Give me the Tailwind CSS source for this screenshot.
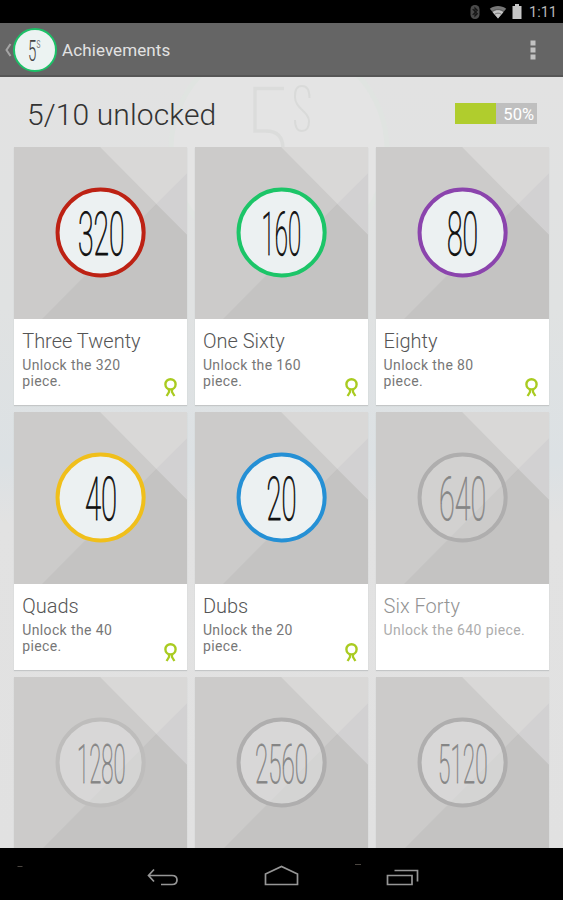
<!DOCTYPE html>
<html lang="en">
<head>
<meta charset="utf-8">
<title>Achievements</title>
<script src="https://cdn.jsdelivr.net/npm/@tailwindcss/browser@4"></script>
</head>
<body class="h-[900px] w-[563px] overflow-hidden bg-black font-['Roboto',sans-serif]">
<div class="flex h-[900px] flex-col">
  <div class="flex h-[23px] shrink-0 items-center justify-end pr-[6px] text-[#b9b9b9]">
    <svg class="mr-[8px] h-[16px] w-[12px]" viewBox="0 0 12 16"><rect x="1.5" y="1" width="9" height="14" rx="4.2" fill="#4a4a4a"/><path d="M3.7 5.2l4.6 4.6L6 12V4l2.3 2.2-4.6 4.6" fill="none" stroke="#161616" stroke-width="1.2"/></svg>
    <svg class="mr-[5px] h-[14px] w-[18px]" viewBox="0 0 18 14"><path d="M.8 3.8C5.500 0 12.500 0 17.200 3.800L9 13.500z" fill="#777"/><path d="M3.700 7.200C6.500 4.700 11.500 4.700 14.300 7.200L9 13.500z" fill="#c4c4c4"/><path d="M3 6.600c3.500-3 8.500-3 12 0M5.500 9.400c2-1.700 5-1.700 7 0" fill="none" stroke="#555" stroke-width=".7"/></svg>
    <svg class="mr-[7px] h-[15px] w-[10px]" viewBox="0 0 10 15"><path d="M3 0h4v2h2.500v13H.500V2H3z" fill="#c6c6c6"/></svg>
    <span class="mt-[4px] text-[14.500px] leading-none">1:11</span>
  </div>
  <header class="flex h-[54px] shrink-0 items-center border-b-2 border-[#565656] bg-[#656565] pt-[2px] pr-[25px] pl-[4px]">
    <svg class="h-[16px] w-[8px]" viewBox="0 0 8 16"><path d="M6.500 2L2.500 8l4 6" fill="none" stroke="#a5a5a5" stroke-width="2"/></svg>
    <svg class="h-[46px] w-[46px]" viewBox="0 0 46 46"><circle cx="23" cy="23" r="21" fill="#ecf3f2" stroke="#1cc268" stroke-width="2"/><text transform="translate(16 34) scale(.5 1)" font-size="30" font-weight="300" fill="#444">5</text><text transform="translate(24.500 20.500) scale(.6 1)" font-size="11" fill="#777">S</text></svg>
    <h1 class="ml-[4px] text-[17px] leading-none tracking-[0.100px] text-[#e2e2e2]">Achievements</h1>
    <svg class="ml-auto h-[20px] w-[10px]" viewBox="0 0 10 20"><path d="M2.500 .500h5v5h-5zM2.500 7.500h5v5h-5zM2.500 14.500h5v5h-5z" fill="#c2c2c2"/></svg>
  </header>
  <main class="relative isolate min-h-0 flex-1 overflow-hidden bg-[#e2e2e2]">
    <svg class="absolute inset-0 -z-10 h-[771px] w-[563px]" viewBox="0 0 563 771"><defs><linearGradient id="wash" x1="0" y1="0" x2="0" y2="1"><stop offset="0" stop-color="#e2e2e2"/><stop offset=".3" stop-color="#e0e2e2"/><stop offset=".5" stop-color="#dce1e4"/><stop offset=".58" stop-color="#e2e2e2"/><stop offset="1" stop-color="#e1e1e1"/></linearGradient></defs><rect width="563" height="771" fill="url(#wash)"/><circle cx="279" cy="72" r="108" fill="#e4e4e4" stroke="#e0e4e1" stroke-width="5"/><path d="M284 11.500H255V54h11q17 0 17 18" fill="none" stroke="#dbdcdb" stroke-width="3.500"/><path d="M309.500 21q0-12-7.500-12t-7 11c0 12 14 14 14 24q0 10-7 10t-7-11" fill="none" stroke="#d9dad9" stroke-width="2"/></svg>
    <div class="flex h-[70px] items-center justify-between pr-[26px] pl-[27px]">
      <h2 class="mt-[6px] text-[30px] leading-none font-light tracking-[0.120px] text-[#333]">5/10 unlocked</h2>
      <div class="mt-[3px] flex h-[21px] w-[82px] items-center justify-end bg-[linear-gradient(to_right,#b0cd2d_50%,#bfbfbf_50%)] pr-[3px]"><span class="mt-[4px] text-[16.500px] leading-none text-white">50%</span></div>
    </div>
    <div id="cards" class="grid grid-cols-3 gap-x-[7.500px] gap-y-[7px] px-[14.200px]"></div>
  </main>
  <nav class="relative h-[52px] shrink-0 bg-black">
    <svg class="h-[52px] w-[563px]" viewBox="0 0 563 52" fill="none" stroke="#969696" stroke-width="1.700"><path d="M154 21.500l-5.500 6 5.500 6M148.500 27.500H172q5 0 5 4.500t-5 4.500H161"/><path d="M265.500 36.500V26L281.500 18.500 297.500 26V36.500z"/><path d="M387.500 27.500h24.500v9h-24.500zM394.500 22.500h23v11"/><path d="M17.500 18.500h5M355 16.500h6" stroke="#4a4540" stroke-width="1"/></svg>
  </nav>
</div>
<script>
const cards = [
  ['320','Three Twenty','#bd2214',64.5,45.5],
  ['160','One Sixty','#1cc568',67,38.5],
  ['80','Eighty','#8b44ad',71.5,30],
  ['40','Quads','#f0bf1b',71.5,31],
  ['20','Dubs','#2590d5',72,29],
  ['640','Six Forty','',63.5,46],
  ['1280','','',63.5,47.5],
  ['2560','','',60.5,52],
  ['5120','','',62.5,48.5]
];
const medal = '<svg class="absolute right-[9.500px] bottom-[8.500px] h-[20px] w-[15px]" viewBox="0 0 15 20" fill="none" stroke="#a9cb20"><circle cx="7.5" cy="7.3" r="5.1" stroke-width="2.4"/><path d="M6 12.500v2.500L3.600 19M9 12.500v2.500l2.400 4" stroke-width="2.300"/></svg>';
document.getElementById('cards').innerHTML = cards.map(([n, title, color, x, w], i) => {
  const locked = i > 4, last = i > 5;
  const h = last ? 39 : 43.5, base = last ? 105.5 : 107.5;
  const ring = color || (i === 6 ? '#bebdbc' : '#afaeae');
  const ink = locked ? '#858585' : '#111';
  return `<article class="h-[258px] bg-white shadow-[0_1px_1px_#c4c6c7]">
    <svg class="block h-[172px] w-full" viewBox="0 0 173 172" preserveAspectRatio="none">
      <path d="M0 0h173v172H0z" fill="#cccbca"/><path d="M86 0h87v88z" fill="#d9d8d7"/><path d="M173 26v62l-31-31z" fill="#d2d1d2"/><path d="M142 57l31 31v84H28z" fill="#c4c3c2"/>
      <circle cx="86.5" cy="85.5" r="43" fill="${locked ? '#e2e2e2' : '#ecf1f2'}" fill-opacity="${locked ? (last ? .55 : .25) : 1}" stroke="${ring}" stroke-width="4"/>
      <text x="${x - .5}" y="${base}" textLength="${w + 1}" lengthAdjust="spacingAndGlyphs" style="text-rendering:geometricPrecision" font-size="${h / .72}" font-weight="100" fill="${ink}" stroke="${ink}" stroke-width="${locked ? .8 : 1.1}">${n}</text>
    </svg>
    ${title ? `<div class="relative h-[86px] px-[8px] pt-[11px]">
      <h3 class="text-[20px] leading-[22px] font-light ${locked ? 'text-[#939393]' : 'text-[#555]'}">${title}</h3>
      <p class="mt-[5px] ${locked ? 'w-[155px] text-[#adadad]' : 'w-[110px] text-[#777]'} text-[14px] leading-[16px] tracking-[0.380px]">Unlock the ${n} piece.</p>
      ${locked ? '' : medal}
    </div>` : ''}
  </article>`;
}).join('');
</script>
</body>
</html>
